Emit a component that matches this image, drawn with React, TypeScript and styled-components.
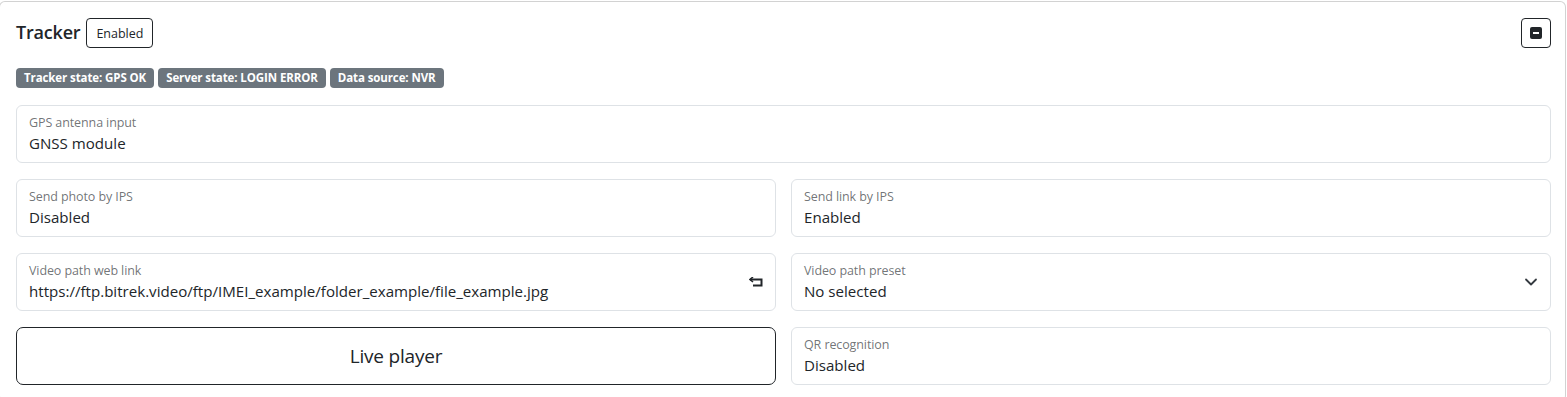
import React from 'react';
import styled, { createGlobalStyle } from 'styled-components';

const GlobalStyle = createGlobalStyle`
  * { box-sizing: border-box; }
  body {
    margin: 0;
    background: #ffffff;
    font-family: "Open Sans", "Noto Sans", sans-serif;
    color: #212529;
    overflow: hidden;
  }
`;

const Page = styled.div`
  padding-top: 1px;
`;

const Card = styled.div`
  margin-left: -1px;
  width: 1567px;
  border: 1px solid rgba(0, 0, 0, 0.175);
  border-radius: 6px;
  padding: 16px 14px 16px 16px;
  background: #ffffff;
`;

const Header = styled.div`
  display: flex;
  align-items: center;
  justify-content: space-between;
  height: 30px;
`;

const TitleGroup = styled.div`
  display: flex;
  align-items: center;
  gap: 6px;
`;

const Title = styled.h5`
  margin: 0;
  font-size: 18px;
  font-weight: 600;
  line-height: 1.2;
  letter-spacing: -0.2px;
`;

const OutlineTag = styled.span`
  display: inline-flex;
  align-items: center;
  height: 30px;
  padding: 0 9px;
  border: 1px solid #212529;
  border-radius: 4px;
  font-size: 12.5px;
`;

const IconButton = styled.button`
  display: flex;
  align-items: center;
  justify-content: center;
  width: 30px;
  height: 30px;
  padding: 0;
  border: 1px solid #212529;
  border-radius: 4px;
  background: #ffffff;
  color: #212529;
`;

const Badges = styled.div`
  display: flex;
  gap: 4px;
  margin-top: 20px;
`;

const Badge = styled.span`
  display: inline-block;
  padding: 4px 8px;
  background: #6c757d;
  color: #ffffff;
  border-radius: 4px;
  font-size: 11.5px;
  font-weight: 700;
  line-height: 12px;
  letter-spacing: -0.1px;
`;

const Grid = styled.div`
  display: grid;
  grid-template-columns: 1fr 1fr;
  column-gap: 15px;
  row-gap: 16px;
  margin-top: 17px;
`;

const Field = styled.div<{ $wide?: boolean }>`
  position: relative;
  grid-column: ${(p) => (p.$wide ? '1 / -1' : 'auto')};
  height: 58px;
  border: 1px solid #dee2e6;
  border-radius: 6px;
  padding: 8px 40px 0 12px;
  display: flex;
  flex-direction: column;
`;

const Label = styled.span`
  font-size: 12.5px;
  line-height: 18px;
  color: rgba(33, 37, 41, 0.65);
  letter-spacing: -0.1px;
`;

const Value = styled.span`
  font-size: 15.1px;
  line-height: 22px;
  white-space: nowrap;
`;

const TrailingIcon = styled.span`
  position: absolute;
  right: 12px;
  top: 50%;
  transform: translateY(-50%);
  display: flex;
  color: #212529;
`;

const PlayerButton = styled.button`
  height: 58px;
  border: 1px solid #212529;
  border-radius: 7px;
  background: #ffffff;
  color: #212529;
  font-family: inherit;
  font-size: 19px;
  letter-spacing: -0.2px;
`;

const MinusSquare = () => (
  <svg width="12" height="12" viewBox="0 0 12 12">
    <rect x="0" y="0" width="12" height="12" rx="2" fill="#212529" />
    <rect x="3" y="5" width="6" height="2" fill="#ffffff" />
  </svg>
);

const ReturnIcon = () => (
  <svg width="14" height="10" viewBox="0 0 14 10" fill="none">
    <path d="M1 2.5 H12.5 V8.5 H4" stroke="#212529" strokeWidth="2" />
    <path d="M4 0 L1 2.5 L4 5" stroke="#212529" strokeWidth="1.6" fill="none" />
  </svg>
);

const Chevron = () => (
  <svg width="14" height="8" viewBox="0 0 14 8" fill="none">
    <path d="M2 1.5 L7 6.5 L12 1.5" stroke="#343a40" strokeWidth="1.8" strokeLinecap="round" strokeLinejoin="round" />
  </svg>
);

const App: React.FC = () => {
  return (
    <Page>
      <GlobalStyle />
      <Card>
        <Header>
          <TitleGroup>
            <Title>Tracker</Title>
            <OutlineTag>Enabled</OutlineTag>
          </TitleGroup>
          <IconButton aria-label="Collapse">
            <MinusSquare />
          </IconButton>
        </Header>
        <Badges>
          <Badge>Tracker state: GPS OK</Badge>
          <Badge>Server state: LOGIN ERROR</Badge>
          <Badge>Data source: NVR</Badge>
        </Badges>
        <Grid>
          <Field $wide>
            <Label>GPS antenna input</Label>
            <Value>GNSS module</Value>
          </Field>
          <Field>
            <Label>Send photo by IPS</Label>
            <Value>Disabled</Value>
          </Field>
          <Field>
            <Label>Send link by IPS</Label>
            <Value>Enabled</Value>
          </Field>
          <Field>
            <Label>Video path web link</Label>
            <Value>https://ftp.bitrek.video/ftp/IMEI_example/folder_example/file_example.jpg</Value>
            <TrailingIcon>
              <ReturnIcon />
            </TrailingIcon>
          </Field>
          <Field>
            <Label>Video path preset</Label>
            <Value>No selected</Value>
            <TrailingIcon>
              <Chevron />
            </TrailingIcon>
          </Field>
          <PlayerButton>Live player</PlayerButton>
          <Field>
            <Label>QR recognition</Label>
            <Value>Disabled</Value>
          </Field>
        </Grid>
      </Card>
    </Page>
  );
};

export default App;
